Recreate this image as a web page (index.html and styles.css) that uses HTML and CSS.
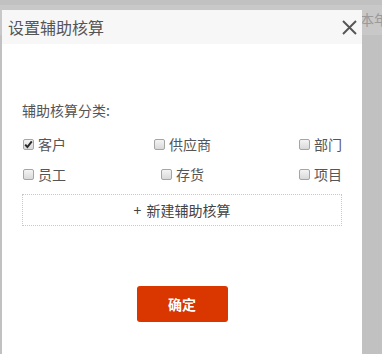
FILE: index.html
```html
<!DOCTYPE html>
<html lang="zh">
<head>
<meta charset="utf-8">
<link rel="stylesheet" href="styles.css">
</head>
<body>
<div class="page">
  <div class="backbar"><span class="backtext">本年</span></div>
  <div class="dialog">
    <div class="dialog-head">
      <span class="title">设置辅助核算</span>
      <span class="close"><svg width="15" height="15" viewBox="0 0 15 15"><path d="M1 1 L14 14 M14 1 L1 14" stroke="#555" stroke-width="1.9" fill="none"/></svg></span>
    </div>
    <div class="dialog-body">
      <div class="label">辅助核算分类:</div>
      <div class="row">
        <label class="item"><span class="cb checked"><svg width="9" height="9" viewBox="0 0 9 9"><path d="M1.2 4.6 L3.4 7 L7.8 1.4" stroke="#2a2a2a" stroke-width="2" fill="none"/></svg></span>客户</label>
        <label class="item"><span class="cb"></span>供应商</label>
        <label class="item"><span class="cb"></span>部门</label>
      </div>
      <div class="row">
        <label class="item"><span class="cb"></span>员工</label>
        <label class="item"><span class="cb"></span>存货</label>
        <label class="item"><span class="cb"></span>项目</label>
      </div>
      <div class="add"><span class="plus">+</span>新建辅助核算</div>
      <div class="actions"><button class="ok">确定</button></div>
    </div>
  </div>
</div>
</body>
</html>
```

FILE: styles.css
```css
html, body {
  margin: 0;
  padding: 0;
}
body {
  background: #c1c1c1;
  font-family: "Noto Sans CJK SC", "Microsoft YaHei", sans-serif;
  width: 382px;
  height: 354px;
  overflow: hidden;
}
.page {
  position: relative;
  width: 382px;
  height: 354px;
}
.backbar {
  margin-top: 5px;
  height: 30px;
  background: #c8c8c8;
  display: flex;
  justify-content: flex-end;
  align-items: flex-start;
}
.backtext {
  font-size: 14px;
  line-height: 28px;
  color: #9a9a9a;
  margin-right: -6px;
}
.dialog {
  position: absolute;
  left: 2px;
  top: 5px;
  width: 360px;
  bottom: 0;
  background: #fff;
}
.dialog-head {
  height: 34px;
  background: #f7f7f7;
  display: flex;
  align-items: center;
  justify-content: space-between;
  padding: 0 5px 0 6px;
}
.title {
  font-size: 16px;
  line-height: 34px;
  color: #555;
}
.close {
  display: flex;
  width: 15px;
  height: 15px;
  margin-top: 1px;
}
.dialog-body {
  padding: 0 20px;
}
.label {
  margin-top: 56px;
  font-size: 14px;
  line-height: 20px;
  color: #555;
}
.row {
  display: flex;
  justify-content: space-between;
  margin-top: 14px;
}
.row + .row {
  margin-top: 10px;
}
.item {
  display: flex;
  align-items: center;
  font-size: 14px;
  line-height: 20px;
  color: #555;
}
.cb {
  box-sizing: border-box;
  width: 11px;
  height: 11px;
  margin: 1px 4px 0 1px;
  border: 1px solid #a5a5a5;
  border-radius: 2px;
  background: linear-gradient(#f4f4f4, #d9d9d9);
  display: flex;
  align-items: center;
  justify-content: center;
}
.add {
  box-sizing: border-box;
  margin-top: 10px;
  height: 32px;
  border: 1px dotted #c8c8c8;
  text-align: center;
  font-size: 14px;
  line-height: 30px;
  color: #444;
}
.plus {
  margin-right: 5px;
}
.actions {
  display: flex;
  justify-content: center;
  margin-top: 60px;
}
.ok {
  width: 91px;
  height: 36px;
  border: none;
  border-radius: 3px;
  background: #d93600;
  color: #fff;
  font-family: "Noto Sans CJK SC", sans-serif;
  font-size: 14px;
  font-weight: bold;
  padding: 0;
}
```
